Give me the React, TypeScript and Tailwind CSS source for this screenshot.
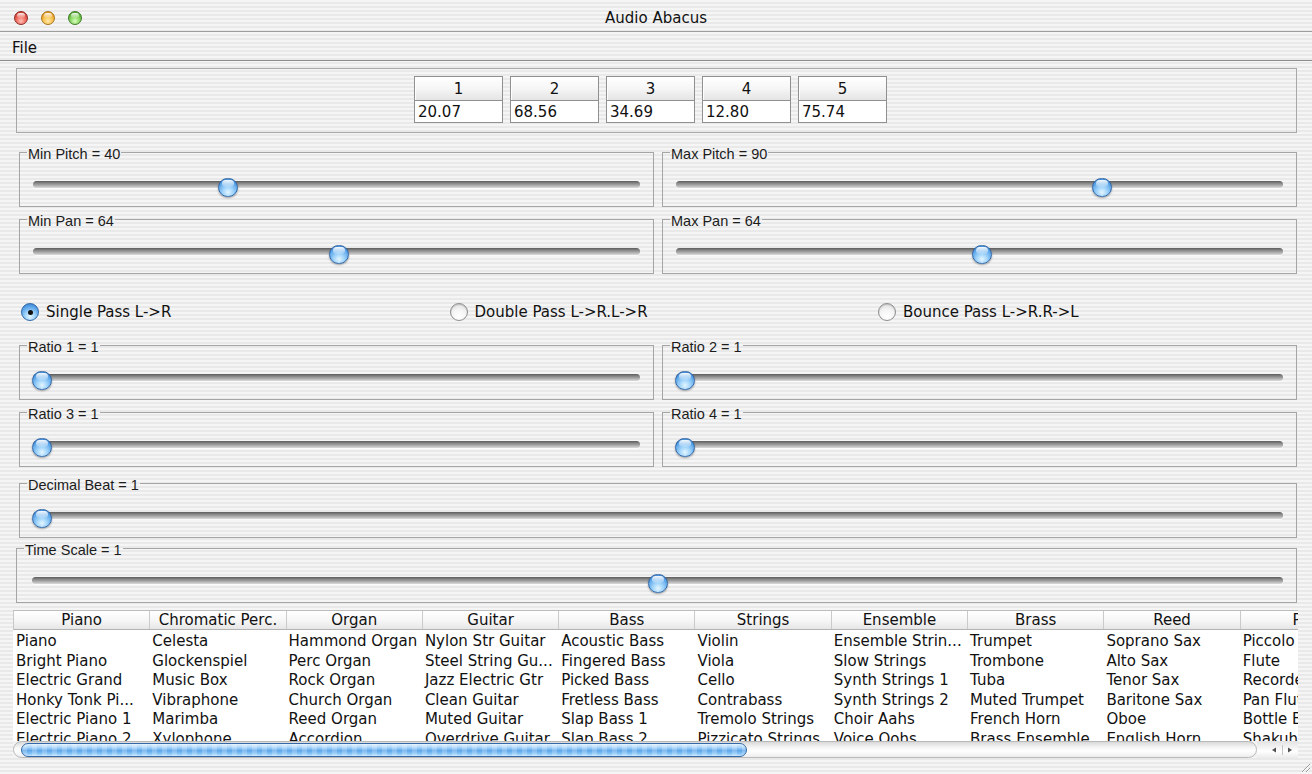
import React from "react";

type Column = { name: string; items: string[] };

const columns: Column[] = [
  { name: "Piano", items: ["Piano", "Bright Piano", "Electric Grand", "Honky Tonk Pi...", "Electric Piano 1", "Electric Piano 2"] },
  { name: "Chromatic Perc.", items: ["Celesta", "Glockenspiel", "Music Box", "Vibraphone", "Marimba", "Xylophone"] },
  { name: "Organ", items: ["Hammond Organ", "Perc Organ", "Rock Organ", "Church Organ", "Reed Organ", "Accordion"] },
  { name: "Guitar", items: ["Nylon Str Guitar", "Steel String Gu...", "Jazz Electric Gtr", "Clean Guitar", "Muted Guitar", "Overdrive Guitar"] },
  { name: "Bass", items: ["Acoustic Bass", "Fingered Bass", "Picked Bass", "Fretless Bass", "Slap Bass 1", "Slap Bass 2"] },
  { name: "Strings", items: ["Violin", "Viola", "Cello", "Contrabass", "Tremolo Strings", "Pizzicato Strings"] },
  { name: "Ensemble", items: ["Ensemble Strin...", "Slow Strings", "Synth Strings 1", "Synth Strings 2", "Choir Aahs", "Voice Oohs"] },
  { name: "Brass", items: ["Trumpet", "Trombone", "Tuba", "Muted Trumpet", "French Horn", "Brass Ensemble"] },
  { name: "Reed", items: ["Soprano Sax", "Alto Sax", "Tenor Sax", "Baritone Sax", "Oboe", "English Horn"] },
  { name: "Pipe", items: ["Piccolo", "Flute", "Recorder", "Pan Flute", "Bottle Blow", "Shakuhachi"] },
];

const readouts = [
  { n: "1", v: "20.07" },
  { n: "2", v: "68.56" },
  { n: "3", v: "34.69" },
  { n: "4", v: "12.80" },
  { n: "5", v: "75.74" },
];

function Light({ kind }: { kind: "close" | "min" | "zoom" }) {
  const fill =
    kind === "close"
      ? "bg-[radial-gradient(circle_at_50%_75%,#ffc2b8_0%,#f0685c_45%,#c6362b_85%,#a52a21_100%)] border-[#8c2a22]"
      : kind === "min"
      ? "bg-[radial-gradient(circle_at_50%_75%,#ffe9a8_0%,#f7c04e_45%,#dd921a_85%,#c07a10_100%)] border-[#a8731a]"
      : "bg-[radial-gradient(circle_at_50%_75%,#d8ffc0_0%,#86d45e_45%,#4a9f2c_85%,#3a8522_100%)] border-[#3b7a25]";
  return (
    <div className={`size-[14px] rounded-full border ${fill}`}>
      <div className="mx-auto mt-[1px] h-[5px] w-[8px] rounded-full bg-gradient-to-b from-white/90 to-white/10" />
    </div>
  );
}

function Knob({ frac }: { frac: number }) {
  return (
    <div
      className="absolute top-[-3px] h-[19px] w-[20px] rounded-full border border-[#3167a8] bg-[radial-gradient(circle_at_50%_78%,#e4f6ff_0%,#a2d5fb_32%,#539fe6_70%,#3676c4_100%)] shadow-[0_1px_2px_rgba(0,0,0,0.35)]"
      style={{ left: `calc(${frac} * (100% - 18px) - 1px)` }}
    >
      <div className="mx-auto mt-[1px] h-[7px] w-[12px] rounded-full bg-gradient-to-b from-white/95 to-white/15" />
    </div>
  );
}

function Slider({ frac, className }: { frac: number; className: string }) {
  return (
    <div className={`relative mt-[21px] h-[20px] ${className}`}>
      <div className="mt-[6px] h-[7px] rounded-full bg-[linear-gradient(180deg,#5c5c5c_0%,#8a8a8a_35%,#b4b4b4_70%,#dcdcdc_100%)] shadow-[0_1px_1px_rgba(255,255,255,0.8)]" />
      <Knob frac={frac} />
    </div>
  );
}

function Group({
  label,
  frac,
  className = "",
  track = "mx-[13px]",
}: {
  label: string;
  frac: number;
  className?: string;
  track?: string;
}) {
  return (
    <fieldset className={`h-[63px] min-w-0 border border-[#a5a5a5] ${className}`}>
      <legend className="relative top-[2px] ml-[7px] px-[1px] font-['Liberation_Sans',Arial,sans-serif] text-[14.5px] leading-[16px] text-[#1c1c1c]">
        {label}
      </legend>
      <Slider frac={frac} className={track} />
    </fieldset>
  );
}

function Radio({ checked, label }: { checked?: boolean; label: string }) {
  return (
    <div className="flex w-[428.5px] shrink-0 items-center gap-[7px]">
      {checked ? (
        <div className="flex size-[18px] items-center justify-center rounded-full border border-[#3167a8] bg-[radial-gradient(circle_at_50%_78%,#e4f6ff_0%,#a2d5fb_32%,#539fe6_70%,#3676c4_100%)]">
          <div className="size-[5px] rounded-full bg-[#111]" />
        </div>
      ) : (
        <div className="size-[18px] rounded-full border border-[#8e8e8e] bg-[radial-gradient(circle_at_50%_80%,#ffffff_0%,#f4f4f4_50%,#d6d6d6_100%)] shadow-[inset_0_1px_1px_rgba(0,0,0,0.15)]" />
      )}
      <span className="text-[15px] leading-[18px] text-[#111]">{label}</span>
    </div>
  );
}

export default function App() {
  return (
    <div className="flex h-[774px] w-[1312px] flex-col overflow-hidden bg-[repeating-linear-gradient(180deg,#f5f5f5_0px,#f5f5f5_2px,#e9e9e9_2px,#e9e9e9_4px)] font-['DejaVu_Sans',sans-serif] text-black">
      {/* title bar */}
      <div className="grid h-[32px] shrink-0 grid-cols-[1fr_auto_1fr] items-center border-b border-[#9d9d9d] pt-[4px]">
        <div className="flex gap-[13px] pl-[14px]">
          <Light kind="close" />
          <Light kind="min" />
          <Light kind="zoom" />
        </div>
        <div className="text-[15px] leading-[18px] text-[#111]">Audio Abacus</div>
        <div />
      </div>

      {/* menu bar */}
      <div className="flex h-[29px] shrink-0 items-center border-b border-[#8c8c8c] pl-[12px] pt-[3px]">
        <span className="text-[15px] leading-[18px] text-[#111]">File</span>
      </div>

      {/* readout panel */}
      <div className="ml-[16px] mr-[15px] mt-[7px] h-[65px] shrink-0 border border-[#a8a8a8]">
        <div className="ml-[397px] mt-[7px] flex gap-[7px]">
          {readouts.map((r) => (
            <div key={r.n} className="w-[89px] shrink-0">
              <div className="h-[25px] border border-[#909090] bg-[linear-gradient(180deg,#ffffff_0%,#f6f6f6_50%,#e4e4e4_100%)] text-center text-[15px] leading-[25px] text-[#111] shadow-[inset_1px_1px_0_#ffffff]">
                {r.n}
              </div>
              <div className="h-[22px] border border-t-0 border-[#909090] bg-white pl-[3px] text-[15px] leading-[22px] text-[#111]">
                {r.v}
              </div>
            </div>
          ))}
        </div>
      </div>

      {/* pitch / pan ranges */}
      <div className="ml-[19px] mr-[15px] mt-[11px] grid shrink-0 grid-cols-2 gap-x-[8px] gap-y-[4px]">
        <Group label="Min Pitch = 40" frac={40 / 127} />
        <Group label="Max Pitch = 90" frac={90 / 127} />
        <Group label="Min Pan = 64" frac={64 / 127} />
        <Group label="Max Pan = 64" frac={64 / 127} />
      </div>

      {/* pass mode */}
      <div className="flex h-[63px] shrink-0 items-center pl-[21px] pt-[13px]">
        <Radio checked label="Single Pass L->R" />
        <Radio label="Double Pass L->R.L->R" />
        <Radio label="Bounce Pass L->R.R->L" />
      </div>

      {/* ratios */}
      <div className="ml-[19px] mr-[15px] grid shrink-0 grid-cols-2 gap-x-[8px] gap-y-[4px]">
        <Group label="Ratio 1 = 1" frac={0} />
        <Group label="Ratio 2 = 1" frac={0} />
        <Group label="Ratio 3 = 1" frac={0} />
        <Group label="Ratio 4 = 1" frac={0} />
      </div>

      <Group label="Decimal Beat = 1" frac={0} className="ml-[19px] mr-[15px] mt-[8px] shrink-0" />
      <Group
        label="Time Scale = 1"
        frac={0.5}
        className="ml-[16px] mr-[15px] mt-[2px] shrink-0"
        track="ml-[15px] mr-[13px]"
      />

      {/* instrument table */}
      <div className="ml-[13px] mr-[14px] mt-[7px] flex shrink-0 flex-col">
        <div className="flex h-[20px] overflow-hidden border border-b-[#b3b3b3] border-l-[#c8c8c8] border-r-0 border-t-[#bdbdbd] bg-[linear-gradient(180deg,#ffffff_0%,#f7f7f7_50%,#e6e6e6_100%)]">
          {columns.map((c) => (
            <div
              key={c.name}
              className="w-[136.3px] shrink-0 overflow-hidden whitespace-nowrap border-r border-[#cacaca] text-center text-[15px] leading-[19px] text-[#111]"
            >
              {c.name}
            </div>
          ))}
        </div>
        <div className="flex h-[111px] overflow-hidden bg-white pt-[2px]">
          {columns.map((c) => (
            <div key={c.name} className="flex w-[136.3px] shrink-0 flex-col">
              {c.items.map((it) => (
                <div
                  key={it}
                  className="h-[19.6px] shrink-0 overflow-hidden whitespace-nowrap pl-[3px] text-[15px] leading-[19.6px] text-[#111]"
                >
                  {it}
                </div>
              ))}
            </div>
          ))}
        </div>
        {/* horizontal scroller */}
        <div className="flex h-[17px] bg-[#f3f3f3]">
          <div className="flex flex-1 items-center rounded-full border border-[#b9b9b9] bg-[linear-gradient(180deg,#d9d9d9_0%,#f4f4f4_35%,#ffffff_60%,#ededed_100%)] pl-[7px]">
            <div className="h-[14px] w-[726px] rounded-full border border-[#3468a6] bg-[repeating-linear-gradient(90deg,rgba(255,255,255,0.22)_0px,rgba(255,255,255,0.22)_5px,rgba(255,255,255,0)_5px,rgba(255,255,255,0)_10px),linear-gradient(180deg,#e3f3ff_0%,#a9d5fa_28%,#5ea7ea_55%,#86c3f6_80%,#c6e6ff_100%)]" />
          </div>
          <div className="flex w-[41px] items-center bg-[linear-gradient(180deg,#e2e2e2_0%,#f7f7f7_45%,#ffffff_60%,#ebebeb_100%)]">
            <svg width="41" height="16" viewBox="0 0 41 16">
              <path d="M15 8 L19 5.5 L19 10.5 Z" fill="#505050" />
              <line x1="25.5" y1="3" x2="25.5" y2="13" stroke="#c4c4c4" />
              <path d="M35 8 L31 5.5 L31 10.5 Z" fill="#505050" />
            </svg>
          </div>
        </div>
      </div>

      {/* resize grip */}
      <div className="flex flex-1 items-end justify-end">
        <svg width="12" height="12" viewBox="0 0 12 12" className="mb-[1px] mr-[1px]">
          <line x1="11" y1="3" x2="3" y2="11" stroke="#9a9a9a" />
          <line x1="11" y1="7" x2="7" y2="11" stroke="#9a9a9a" />
          <line x1="11" y1="4" x2="4" y2="11" stroke="#ffffff" />
          <line x1="11" y1="8" x2="8" y2="11" stroke="#ffffff" />
        </svg>
      </div>
    </div>
  );
}
